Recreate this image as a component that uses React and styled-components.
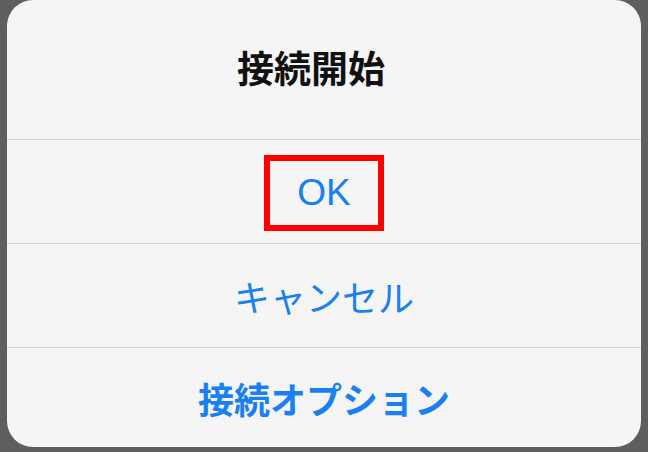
import styled, { createGlobalStyle } from "styled-components";

const GlobalStyle = createGlobalStyle`
  html, body {
    margin: 0;
    padding: 0;
    background: #5e5e5e;
  }
  body {
    font-family: "Noto Sans CJK JP", "Noto Sans", sans-serif;
  }
`;

const Page = styled.div`
  width: 648px;
  height: 452px;
  padding: 0 7px;
  box-sizing: border-box;
  overflow: hidden;
`;

const Sheet = styled.div`
  display: flex;
  flex-direction: column;
  height: 447px;
  background: #f5f5f5;
  border-radius: 26px;
  overflow: hidden;
`;

const Title = styled.div`
  height: 140px;
  flex-shrink: 0;
  display: flex;
  align-items: center;
  justify-content: center;
  font-size: 37px;
  font-weight: 700;
  color: #111;
  border-bottom: 1px solid #d2d2d2;
  padding: 0 26px 6px 0;
  box-sizing: border-box;
`;

const Action = styled.div`
  height: ${(p) => (p.$last ? "auto" : "104px")};
  flex: ${(p) => (p.$last ? 1 : "none")};
  box-sizing: border-box;
  display: flex;
  align-items: center;
  justify-content: center;
  font-size: 36px;
  font-weight: ${(p) => (p.$bold ? 700 : 400)};
  color: #1a7ff0;
  border-bottom: ${(p) => (p.$last ? "none" : "1px solid #d2d2d2")};
`;

const Highlight = styled.span`
  display: flex;
  align-items: center;
  justify-content: center;
  width: 120px;
  height: 76px;
  box-sizing: border-box;
  border: 6px solid #ff0000;
  font-family: "Liberation Sans", Arial, sans-serif;
  font-size: 37px;
  margin-top: 2px;
`;

export default function App() {
  return (
    <>
      <GlobalStyle />
      <Page>
        <Sheet>
          <Title>接続開始</Title>
          <Action>
            <Highlight>OK</Highlight>
          </Action>
          <Action>キャンセル</Action>
          <Action $bold $last>
            接続オプション
          </Action>
        </Sheet>
      </Page>
    </>
  );
}
